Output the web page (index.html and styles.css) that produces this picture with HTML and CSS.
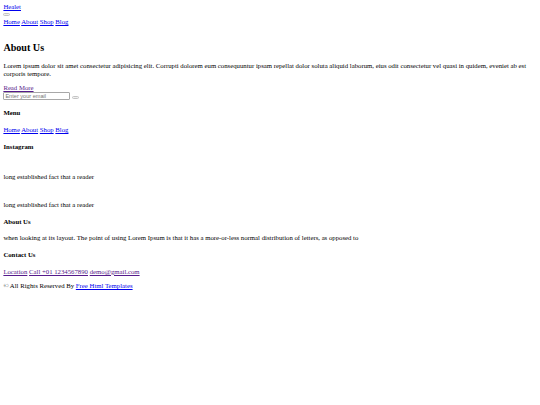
FILE: index.html
```html
<!DOCTYPE html>
<html lang="en">
<head>
<meta charset="utf-8">
<title>Healet</title>
<link rel="stylesheet" href="styles.css">
</head>
<body class="page">
<header class="site-header">
  <div class="brand-row"><a class="brand" href="#">Healet</a></div>
  <div class="toggler-row"><button class="toggler" type="button"></button></div>
  <nav class="main-nav"><a href="#">Home</a> <a href="#">About</a> <a href="#">Shop</a> <a href="#">Blog</a></nav>
</header>
<section class="about">
  <h2 class="about-title">About Us</h2>
  <p class="about-text">Lorem ipsum dolor sit amet consectetur adipisicing elit. Corrupti dolorem eum consequuntur ipsam repellat dolor soluta aliquid laborum, eius odit consectetur vel quasi in quidem, eveniet ab est corporis tempore.</p>
  <a class="read-more visited" href="#">Read More</a>
</section>
<form class="subscribe">
  <input class="email" type="text" placeholder="Enter your email">
  <button class="send" type="button"></button>
</form>
<footer class="site-footer">
  <h4 class="f-title">Menu</h4>
  <p class="f-links"><a href="#">Home</a> <a href="#">About</a> <a href="#">Shop</a> <a href="#">Blog</a></p>
  <h4 class="f-title">Instagram</h4>
  <div class="insta-item"></div>
  <p class="f-text">long established fact that a reader</p>
  <div class="insta-item"></div>
  <p class="f-text">long established fact that a reader</p>
  <h4 class="f-title">About Us</h4>
  <p class="f-text">when looking at its layout. The point of using Lorem Ipsum is that it has a more-or-less normal distribution of letters, as opposed to</p>
  <h4 class="f-title">Contact Us</h4>
  <p class="f-contact"><a class="visited" href="#">Location</a> <a class="visited" href="#">Call +01 1234567890</a> <a class="visited" href="#">demo@gmail.com</a></p>
  <p class="copyright">&copy; All Rights Reserved By <a href="#">Free Html Templates</a></p>
</footer>
</body>
</html>
```

FILE: styles.css
```css
html {
  background: #ffffff;
}
.page {
  margin: 3.375px;
  font-family: "Liberation Serif", "Times New Roman", serif;
  font-size: 6.75px;
  line-height: 7.76px;
  color: #000000;
}
a {
  color: #0000ee;
}
a.visited {
  color: #551a8b;
}
.brand-row,
.main-nav,
.read-more {
  line-height: 7.76px;
}
.toggler-row {
  height: 6.9px;
  box-sizing: border-box;
  padding-top: 1.6px;
  display: flex;
  align-items: flex-start;
}
.toggler,
.send {
  width: 7px;
  height: 3px;
  padding: 0;
  border: 1px solid #c4c4c4;
  border-radius: 1.5px;
  background: #efefef;
}
.main-nav {
  margin-bottom: 16px;
}
.about-title {
  font-size: 10.125px;
  line-height: 11.64px;
  margin: 8.4px 0;
}
.about-text {
  margin: 6.75px 0;
}
.subscribe {
  display: flex;
  align-items: flex-end;
  gap: 2px;
  margin: 0;
}
.email {
  width: 67px;
  height: 8.5px;
  box-sizing: border-box;
  margin: 0;
  padding: 0 1px;
  border: 1px solid #a8a8a8;
  border-radius: 1px;
  font-family: "Liberation Sans", Arial, sans-serif;
  font-size: 5.6px;
  color: #000000;
}
.email::placeholder {
  color: #757575;
}
.send {
  margin-bottom: 1.5px;
}
.f-title {
  font-size: 6.75px;
  line-height: 7.76px;
  margin: 9px 0;
}
.f-links,
.f-text,
.f-contact,
.copyright {
  margin: 6.75px 0;
}
.insta-item {
  height: 6.6px;
}
```
